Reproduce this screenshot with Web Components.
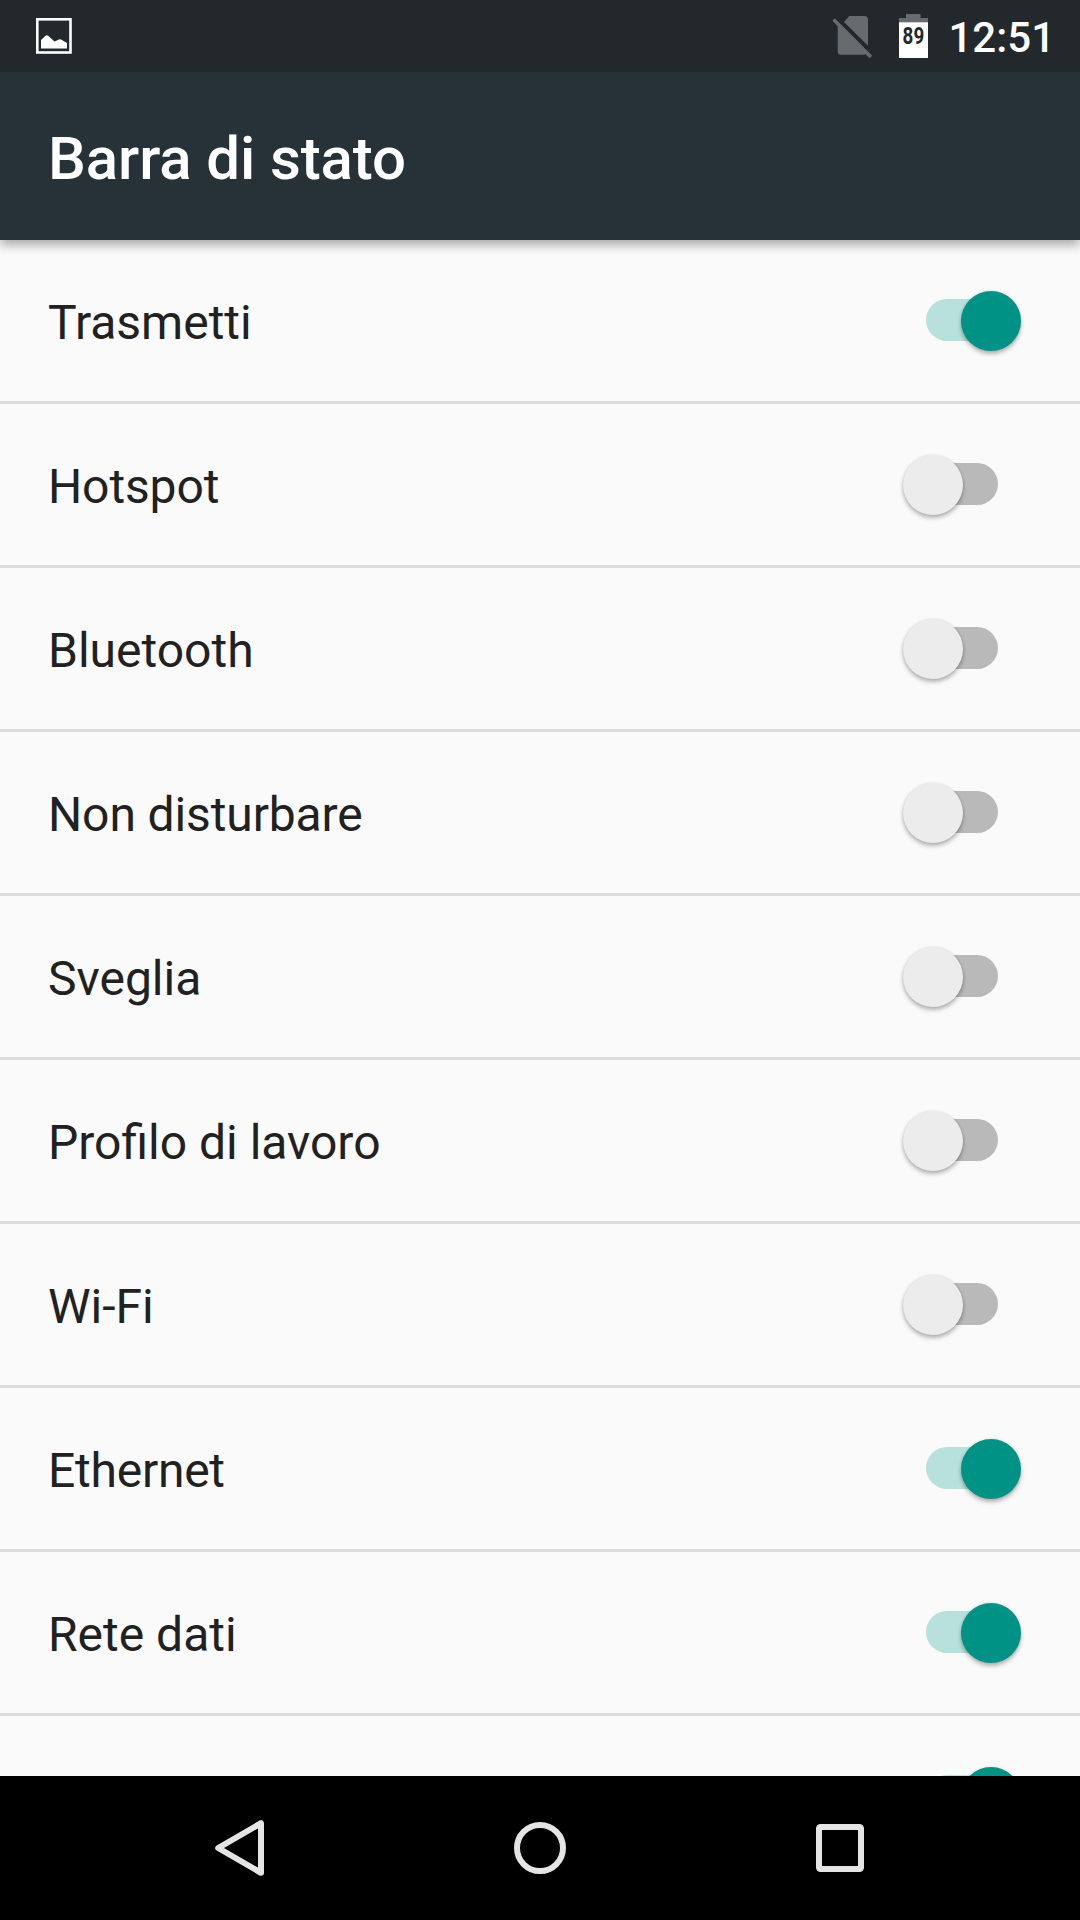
<!DOCTYPE html>
<html lang="it">
<head>
<meta charset="utf-8">
<title>Barra di stato</title>
<style>
  html, body {
    margin: 0;
    height: 100%;
    overflow: hidden;
  }
  body {
    --surface: #fafafa;
    --primary: #263238;
    --primary-dark: #22282b;
    --accent: #009385;
    --divider: #dcdcdc;
    font-family: Roboto, "Noto Sans", sans-serif;
    color: #212121;
  }
  .tight {
    letter-spacing: -0.12px;
  }
  .tighter {
    letter-spacing: -0.25px;
  }
</style>
</head>
<body>
<phone-screen>
  <status-bar slot="top" time="12:51" battery="89"></status-bar>
  <app-bar slot="top">Barra di stato</app-bar>
  <switch-row checked>Trasmetti</switch-row>
  <switch-row class="tight">Hotspot</switch-row>
  <switch-row>Bluetooth</switch-row>
  <switch-row class="tight">Non disturbare</switch-row>
  <switch-row>Sveglia</switch-row>
  <switch-row>Profilo di lavoro</switch-row>
  <switch-row>Wi-Fi</switch-row>
  <switch-row checked class="tighter">Ethernet</switch-row>
  <switch-row checked>Rete dati</switch-row>
  <switch-row checked></switch-row>
  <nav-bar slot="bottom"></nav-bar>
</phone-screen>

<script>
const css = String.raw
const html = String.raw

class PhoneScreen extends HTMLElement {
  constructor() {
    super()
    this.attachShadow({ mode: "open" })
    this.shadowRoot.innerHTML = html`
      <style>
        ${css`
          :host {
            display: flex;
            flex-direction: column;
            width: 1080px;
            height: 1920px;
            background: var(--surface);
          }
          main {
            flex: 1;
            min-height: 0;
            overflow: hidden;
          }
        `}
      </style>
      <slot name="top"></slot>
      <main><slot></slot></main>
      <slot name="bottom"></slot>
    `
  }
}
customElements.define("phone-screen", PhoneScreen)

class StatusBar extends HTMLElement {
  constructor() {
    super()
    this.attachShadow({ mode: "open" })
  }
  connectedCallback() {
    this.shadowRoot.innerHTML = html`
      <style>
        ${css`
          :host {
            position: relative;
            z-index: 2;
            display: flex;
            align-items: center;
            box-sizing: border-box;
            flex: none;
            height: 72px;
            padding: 0 25px 0 36px;
            background: var(--primary-dark);
            color: #fff;
          }
          svg {
            display: block;
            flex: none;
          }
          .sim {
            margin-left: auto;
            margin-right: 27px;
          }
          .battery {
            margin-right: 20px;
          }
          .battery text {
            font: 700 23px Roboto, sans-serif;
          }
          .time {
            padding-top: 4px;
            font-size: 42px;
            font-weight: 500;
            line-height: 1;
          }
        `}
      </style>
      <svg width="36" height="72" viewBox="36 0 36 72">
        <rect x="37.3" y="19.3" width="33.2" height="33.2" fill="none" stroke="#fff" stroke-width="2.6" />
        <path d="M41 40L45.5 35.8Q47 34.6 48.5 36L54.5 41.6L59 39.4Q60 39 61 39.5L67 43V48.6H41Z" fill="#fff" />
      </svg>
      <svg class="sim" width="40" height="72" viewBox="832 0 40 72" fill="#676b6d">
        <path d="M844 22L849.3 16H864.5Q868 16 868 19.5V45.7Z" />
        <path d="M832.3 20.7L834.8 18.2L872.2 55.7L869.7 58.3L865.6 54.3Q865 54.7 864 54.7H841Q837.7 54.7 837.7 51.5V26Z" />
      </svg>
      <svg class="battery" width="29" height="72" viewBox="899 0 29 72">
        <path d="M899 22.5V18H906V14H920.5V18H928V22.5Z" fill="#676b6d" />
        <path d="M899 22.3H928V58H899Z" fill="#fff" />
        <text x="902.6" y="44.4" textLength="21.6" lengthAdjust="spacingAndGlyphs" fill="#22282b">${this.getAttribute("battery")}</text>
      </svg>
      <span class="time">${this.getAttribute("time")}</span>
    `
  }
}
customElements.define("status-bar", StatusBar)

class AppBar extends HTMLElement {
  constructor() {
    super()
    this.attachShadow({ mode: "open" })
    this.shadowRoot.innerHTML = html`
      <style>
        ${css`
          :host {
            position: relative;
            z-index: 1;
            display: flex;
            align-items: center;
            box-sizing: border-box;
            flex: none;
            height: 168px;
            padding: 5px 48px 0;
            background: var(--primary);
            color: #fff;
            font-size: 60px;
            font-weight: 500;
            letter-spacing: -0.1px;
            box-shadow: 0 5px 10px rgba(0, 0, 0, 0.32);
          }
        `}
      </style>
      <slot></slot>
    `
  }
}
customElements.define("app-bar", AppBar)

class ToggleSwitch extends HTMLElement {
  constructor() {
    super()
    this.attachShadow({ mode: "open" })
    this.shadowRoot.innerHTML = html`
      <style>
        ${css`
          :host {
            position: relative;
            display: block;
            flex: none;
            width: 72px;
            height: 42px;
            border-radius: 21px;
            background: #b9b9b9;
          }
          .thumb {
            position: absolute;
            top: -8px;
            left: -23px;
            width: 60px;
            height: 60px;
            border-radius: 50%;
            background: #ececec;
            box-shadow: 0 3px 4px rgba(0, 0, 0, 0.28), 0 0 3px rgba(0, 0, 0, 0.1);
          }
          :host([checked]) {
            background: #b8e0dc;
          }
          :host([checked]) .thumb {
            left: 35px;
            background: var(--accent);
          }
        `}
      </style>
      <div class="thumb"></div>
    `
  }
}
customElements.define("toggle-switch", ToggleSwitch)

class SwitchRow extends HTMLElement {
  constructor() {
    super()
    this.attachShadow({ mode: "open" })
    this.shadowRoot.innerHTML = html`
      <style>
        ${css`
          :host {
            display: flex;
            align-items: center;
            justify-content: space-between;
            box-sizing: border-box;
            height: 164px;
            padding: 0 82px 0 48px;
            border-bottom: 3px solid var(--divider);
            font-size: 48px;
          }
          .label {
            padding-top: 4px;
          }
          toggle-switch {
            margin-bottom: 1px;
          }
        `}
      </style>
      <span class="label"><slot></slot></span>
      <toggle-switch></toggle-switch>
    `
  }
  static get observedAttributes() {
    return ["checked"]
  }
  attributeChangedCallback() {
    this.shadowRoot
      .querySelector("toggle-switch")
      .toggleAttribute("checked", this.hasAttribute("checked"))
  }
}
customElements.define("switch-row", SwitchRow)

class NavBar extends HTMLElement {
  constructor() {
    super()
    this.attachShadow({ mode: "open" })
    this.shadowRoot.innerHTML = html`
      <style>
        ${css`
          :host {
            position: relative;
            display: flex;
            align-items: center;
            justify-content: center;
            gap: 228px;
            flex: none;
            height: 144px;
            background: #000;
          }
          svg {
            display: block;
            fill: none;
            stroke: #e5e5e5;
            stroke-width: 6;
            stroke-linejoin: round;
          }
        `}
      </style>
      <svg width="72" height="72" viewBox="0 0 72 72"><path d="M14.2 36L57 11.2V60.8Z" /></svg>
      <svg width="72" height="72" viewBox="0 0 72 72"><circle cx="36" cy="36" r="23" /></svg>
      <svg width="72" height="72" viewBox="0 0 72 72"><rect x="15" y="15" width="42" height="42" rx="1.5" /></svg>
    `
  }
}
customElements.define("nav-bar", NavBar)
</script>
</body>
</html>
